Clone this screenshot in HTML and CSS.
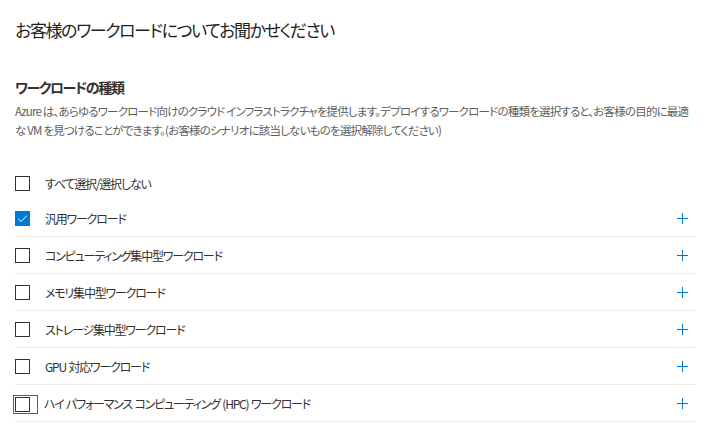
FILE: index.html
```html
<!DOCTYPE html>
<html lang="ja">
<head>
<meta charset="utf-8">
<link rel="stylesheet" href="styles.css">
</head>
<body>
<main class="page">
  <h1 class="title">お客様のワークロードについてお聞かせください</h1>
  <h2 class="section">ワークロードの種類</h2>
  <p class="desc">Azure は、あらゆるワークロード向けのクラウド インフラストラクチャを提供します。デプロイするワークロードの種類を選択すると、お客様の目的に最適な VM を見つけることができます。(お客様のシナリオに該当しないものを選択解除してください)</p>

  <div class="list">
    <div class="row row-all">
      <span class="box"></span>
      <span class="label">すべて選択/選択しない</span>
    </div>
    <div class="row item">
      <span class="box checked"><svg viewBox="0 0 15 15" width="15" height="15"><path d="M3.2 7.8 L6 10.6 L11.9 4.6" fill="none" stroke="#fff" stroke-width="1"/></svg></span>
      <span class="label">汎用ワークロード</span>
      <span class="plus"></span>
    </div>
    <div class="row item">
      <span class="box"></span>
      <span class="label">コンピューティング集中型ワークロード</span>
      <span class="plus"></span>
    </div>
    <div class="row item">
      <span class="box"></span>
      <span class="label">メモリ集中型ワークロード</span>
      <span class="plus"></span>
    </div>
    <div class="row item">
      <span class="box"></span>
      <span class="label">ストレージ集中型ワークロード</span>
      <span class="plus"></span>
    </div>
    <div class="row item">
      <span class="box"></span>
      <span class="label">GPU 対応ワークロード</span>
      <span class="plus"></span>
    </div>
    <div class="row item">
      <span class="focus"><span class="box"></span></span>
      <span class="label">ハイ パフォーマンス コンピューティング (HPC) ワークロード</span>
      <span class="plus"></span>
    </div>
  </div>
</main>
</body>
</html>
```

FILE: styles.css
```css
html, body {
  margin: 0;
  padding: 0;
  background: #ffffff;
}
body {
  font-family: "Noto Sans CJK JP", "Noto Sans", sans-serif;
  font-feature-settings: "palt";
  color: #323130;
}
.page {
  padding: 0 18px 0 15px;
}
.title {
  margin: 0;
  padding-top: 19px;
  font-size: 17px;
  line-height: 22px;
  font-weight: 400;
  letter-spacing: -1.4px;
  color: #201f1e;
}
.section {
  margin: 0;
  padding-top: 36px;
  font-size: 14px;
  line-height: 20px;
  font-weight: 600;
  letter-spacing: -1.4px;
  color: #323130;
}
.desc {
  margin: 5px 0 0;
  font-size: 11.5px;
  line-height: 19px;
  letter-spacing: -0.8px;
  color: #605e5c;
}
.list {
  margin-top: 26px;
}
.row {
  display: flex;
  align-items: center;
  height: 34px;
}
.item {
  height: 36px;
  border-bottom: 1px solid #edebe9;
}
.box {
  flex: none;
  width: 13px;
  height: 13px;
  border: 1px solid #323130;
  background: #fff;
  display: flex;
  align-items: center;
  justify-content: center;
}
.box.checked {
  background: #0078d4;
  border-color: #0078d4;
}
.box svg { display: block; flex: none; }
.focus {
  flex: none;
  display: flex;
  align-items: center;
  width: 22px;
  height: 17px;
  margin-left: -2px;
  padding-left: 1px;
  border: 1px solid #605e5c;
  margin-right: -9px;
  margin-top: 2px;
  box-sizing: content-box;
}
.label {
  flex: 1;
  margin-left: 15px;
  font-size: 12px;
  letter-spacing: -1.2px;
  word-spacing: 1px;
  color: #323130;
}
.plus {
  flex: none;
  position: relative;
  width: 11px;
  height: 11px;
  margin-right: 8px;
}
.plus::before, .plus::after {
  content: "";
  position: absolute;
  background: #0078d4;
}
.plus::before {
  left: 0;
  top: 5px;
  width: 11px;
  height: 1px;
}
.plus::after {
  left: 5px;
  top: 0;
  width: 1px;
  height: 11px;
}
```
